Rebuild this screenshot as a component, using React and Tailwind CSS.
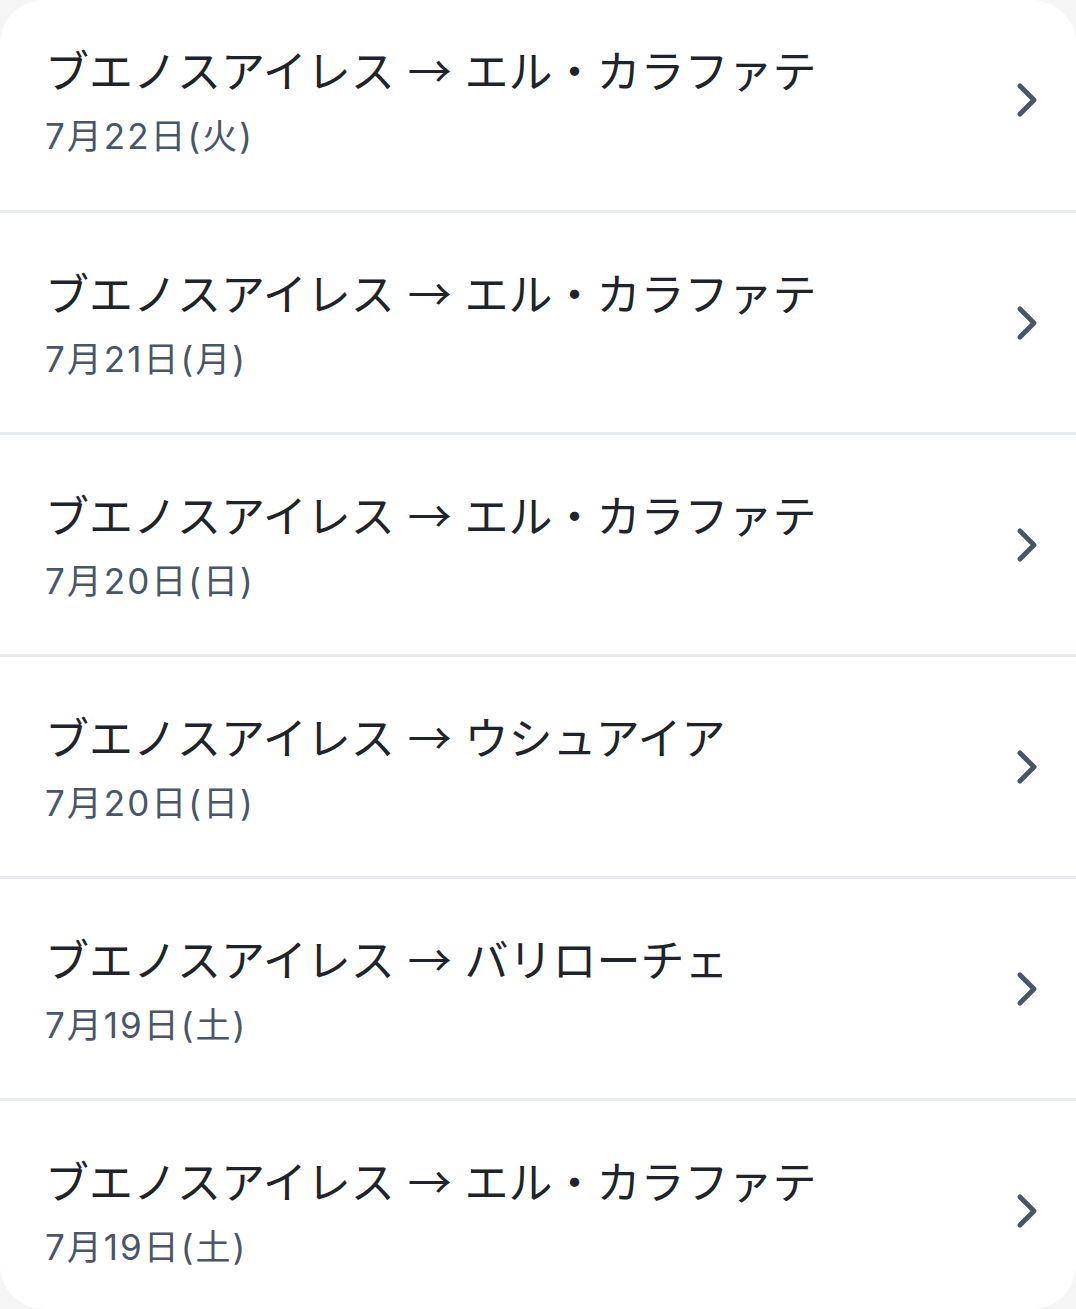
const trips = [
  { to: 'エル・カラファテ', date: '7月22日(火)' },
  { to: 'エル・カラファテ', date: '7月21日(月)' },
  { to: 'エル・カラファテ', date: '7月20日(日)' },
  { to: 'ウシュアイア', date: '7月20日(日)' },
  { to: 'バリローチェ', date: '7月19日(土)' },
  { to: 'エル・カラファテ', date: '7月19日(土)' },
];

function Chevron() {
  return (
    <svg width="24" height="38" viewBox="0 0 24 38" fill="none" className="shrink-0">
      <path d="M5 5 L19 19 L5 33" stroke="#4a5568" strokeWidth="5" strokeLinecap="round" strokeLinejoin="round" />
    </svg>
  );
}

export default function App() {
  return (
    <div className="w-[1076px] h-[1309px] bg-[#f5f5f6] overflow-hidden" style={{ fontFamily: '"Noto Sans CJK JP", "Noto Sans", sans-serif' }}>
      <div className="h-full bg-white rounded-[44px] overflow-hidden">
        {trips.map((t, i) => {
          const first = i === 0;
          const last = i === trips.length - 1;
          const rowCls = first
            ? 'h-[210px] pb-[11px]'
            : last
            ? 'h-[208px] pt-[11px]'
            : 'h-[219px]';
          return (
            <div key={i} className={`${last ? '' : 'border-b-[3px] border-[#e8ebee]'}`}>
              <div className={`${rowCls} flex items-center justify-between pl-[45px] pr-[37px]`}>
                <div className="flex flex-col gap-[20px] mt-[1px]">
                  <span className="text-[44px] leading-[53px] text-[#20242a]">
                    ブエノスアイレス <span className="px-[3px]">→</span> {t.to}
                  </span>
                  <span
                    className="text-[35px] leading-[41px] tracking-[2px] text-[#4a5568]"
                    style={{ fontFamily: 'Inter, "Noto Sans CJK JP", sans-serif' }}
                  >
                    {t.date}
                  </span>
                </div>
                <Chevron />
              </div>
            </div>
          );
        })}
      </div>
    </div>
  );
}
